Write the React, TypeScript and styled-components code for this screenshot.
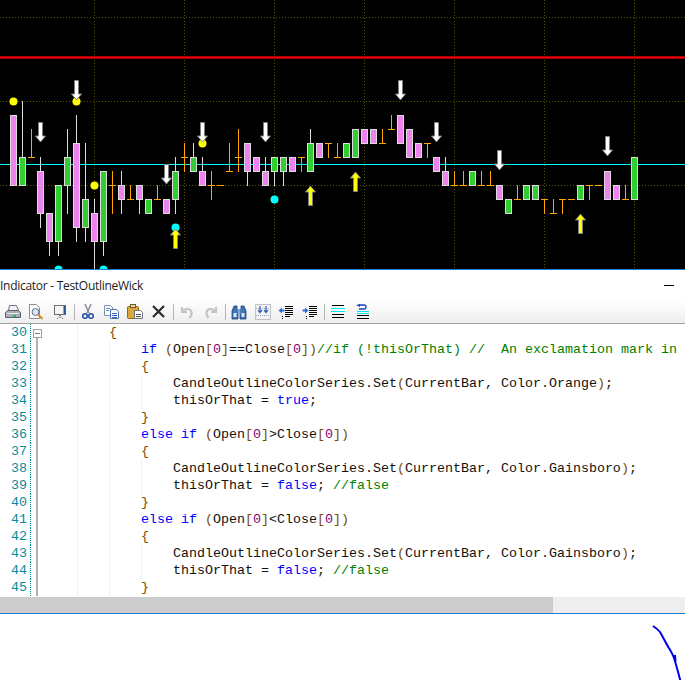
import React from 'react';
import styled, { createGlobalStyle } from 'styled-components';

//
// CHART DATA
//
type Candle =
  | { kind: 'up' | 'down'; top: number; bottom: number; wickTop?: number; wickBottom?: number }
  | { kind: 'doji'; top?: number; bottom?: number; tick: number };

const up = (top: number, bottom: number, wickTop?: number, wickBottom?: number): Candle => ({ kind: 'up', top, bottom, wickTop, wickBottom });
const dn = (top: number, bottom: number, wickTop?: number, wickBottom?: number): Candle => ({ kind: 'down', top, bottom, wickTop, wickBottom });
const dj = (tick: number, top?: number, bottom?: number): Candle => ({ kind: 'doji', tick, top, bottom });

const CANDLES: Candle[] = [
  dn(1, 6), up(4, 6, 0), dj(4, 2, 4), dn(5, 8, 4, 9), dn(8, 10, undefined, 11), up(6, 10, undefined, 11),
  up(4, 6, 2, 8), dn(3, 9, 1, 10), up(7, 9, 3, 10), dn(8, 10, 7, 12), up(5, 10, undefined, 11), dj(6, 5, 8),
  dn(6, 7, 5, 8), dj(7, 6, 7), dn(6, 7, undefined, 8), up(7, 8), dj(7, 6, 7), dn(7, 8),
  up(5, 7, 4, 8), dj(4, 3, 5), up(4, 5, 3), dn(5, 6, 4), dj(6, 5, 7), dj(6),
  dj(5, 3, 5), dj(4, 2, 5), dn(3, 5, undefined, 6), dn(4, 5), dn(5, 6, 4), up(4, 5, undefined, 6),
  up(4, 5, undefined, 6), dn(4, 5), dj(4, 4, 5), up(3, 5, 2), dn(3, 4), dj(3, 3, 4),
  dj(4, 3, 4), up(3, 4), up(2, 4), dn(2, 3), dn(2, 3), dj(3, 2, 3),
  dj(2, 1, 2), dn(1, 3), dn(2, 4), dn(3, 4), dj(3, 3, 4), dn(4, 5),
  dn(5, 6, 4), dj(6, 5, 6), dj(6, 5, 6), up(5, 6), dj(6, 5, 6), dj(6, 5, 6),
  dn(6, 7), up(7, 8), dj(7, 6, 7), up(6, 7), up(6, 7), dj(7, 7, 8),
  dj(8, 7, 8), dj(7, 7, 8), dj(7), up(6, 7), dj(6, 6, 7), dj(6),
  dn(5, 7), dn(6, 7), dj(7, 6, 7), up(4, 7),
];

const GRID_X = [94, 184, 274, 364, 454, 544, 634];
const GRID_Y = [17, 101, 185];
const DOWN_ARROWS = [[76.5, 80], [40.5, 122], [166.5, 164], [202.5, 122], [265.5, 122], [400.5, 80], [436.5, 122], [499.5, 150], [607.5, 136]];
const UP_ARROWS = [[175.5, 228], [310.5, 185], [355.5, 171], [580.5, 213]];
const YELLOW_DOTS = [[13.5, 101.5], [76.5, 101.5], [94.5, 185.5], [202.5, 143.5]];
const CYAN_DOTS = [[175.5, 227.5], [58.5, 269.5], [103.5, 269.5], [274.5, 199.5]];

const level = (n: number) => 101 + 14 * n;

const CandleMark = ({ candle, index }: { candle: Candle; index: number }) => {
  const cx = 13.5 + 9 * index;
  if (candle.kind === 'doji') {
    return (
      <g fill="#ffa500" shapeRendering="crispEdges">
        {candle.top !== undefined && candle.bottom !== undefined && (
          <rect x={cx - 0.5} y={level(candle.top)} width={1} height={level(candle.bottom) - level(candle.top) + 1} />
        )}
        <rect x={cx - 3.5} y={level(candle.tick)} width={7} height={1} />
      </g>
    );
  }
  const { top, bottom, wickTop, wickBottom } = candle;
  return (
    <g shapeRendering="crispEdges">
      {wickTop !== undefined && <rect x={cx - 0.5} y={level(wickTop)} width={1} height={level(top) - level(wickTop)} fill="#dcdcdc" />}
      {wickBottom !== undefined && <rect x={cx - 0.5} y={level(bottom)} width={1} height={level(wickBottom) - level(bottom) + 1} fill="#dcdcdc" />}
      <rect
        x={cx - 3}
        y={level(top) + 0.5}
        width={6}
        height={level(bottom) - level(top)}
        fill={candle.kind === 'up' ? '#32cd32' : '#ee82ee'}
        stroke="#dcdcdc"
      />
    </g>
  );
};

const Arrow = ({ cx, top, dir, fill }: { cx: number; top: number; dir: 'up' | 'down'; fill: string }) => {
  const tip = top + 20;
  const d = dir === 'down'
    ? `M${cx - 2} ${top + 0.5}H${cx + 2}V${tip - 6}H${cx + 5}L${cx} ${tip}L${cx - 5} ${tip - 6}H${cx - 2}Z`
    : `M${cx - 2} ${tip + 0.5}H${cx + 2}V${top + 7}H${cx + 5}L${cx} ${top + 1}L${cx - 5} ${top + 7}H${cx - 2}Z`;
  return <path d={d} fill={fill} stroke="#7f7f7f" strokeWidth={1} />;
};

const PriceChart = () => (
  <ChartSvg width={685} height={269} viewBox="0 0 685 269">
    <rect width={685} height={269} fill="#000" />
    <g stroke="#555500" strokeDasharray="1 2" shapeRendering="crispEdges">
      {GRID_X.map((x) => <line key={x} x1={x + 0.5} y1={0} x2={x + 0.5} y2={269} />)}
      {GRID_Y.map((y) => <line key={y} x1={0} y1={y + 0.5} x2={685} y2={y + 0.5} />)}
    </g>
    <rect y={56} width={685} height={3} fill="#a00000" shapeRendering="crispEdges" />
    <rect y={57} width={685} height={1} fill="#ff0000" shapeRendering="crispEdges" />
    <rect y={164} width={685} height={1} fill="#00ffff" shapeRendering="crispEdges" />
    {CANDLES.map((candle, i) => <CandleMark key={i} candle={candle} index={i} />)}
    {YELLOW_DOTS.map(([x, y]) => <circle key={`${x}y`} cx={x} cy={y} r={4} fill="#ffff00" />)}
    {CYAN_DOTS.map(([x, y]) => <circle key={`${x}c`} cx={x} cy={y} r={4} fill="#00ffff" />)}
    {DOWN_ARROWS.map(([x, y]) => <Arrow key={`${x}d`} cx={x} top={y} dir="down" fill="#fff" />)}
    {UP_ARROWS.map(([x, y]) => <Arrow key={`${x}u`} cx={x} top={y} dir="up" fill="#ffff00" />)}
  </ChartSvg>
);

//
// TOOLBAR ICONS
//
const Lines = ({ rows }: { rows: [number, number, number, string][] }) => (
  <g shapeRendering="crispEdges">
    {rows.map(([x, y, w, c], i) => <rect key={i} x={x} y={y} width={w} height={1} fill={c} />)}
  </g>
);

const ICONS: Record<string, React.ReactNode> = {
  print: (
    <>
      <path d="M4.500 1.500h7l2 5h-10z" fill="#f4f4f4" stroke="#6d7480" />
      <path d="M0.500 8.500l2-2h11l2 2v5h-15z" fill="#a9afb8" stroke="#59606b" />
      <rect x="2" y="9" width="12" height="1" fill="#e6e8ec" />
      <rect x="8" y="11" width="3" height="2" fill="#25c04a" />
    </>
  ),
  preview: (
    <>
      <path d="M1.500 0.500h7l3 3v11h-10z" fill="#fff" stroke="#8c8f99" />
      <circle cx="7.500" cy="8" r="3.500" fill="#d6e6f5" stroke="#66707c" />
      <path d="M10 10.500l4.500 4.500" stroke="#d98a1f" strokeWidth="2" />
    </>
  ),
  board: (
    <>
      <rect x="2.500" y="1.500" width="11" height="9" fill="#f5f5f5" stroke="#6e6e6e" />
      <path d="M12.500 2v8" stroke="#29568f" strokeWidth="2" />
      <path d="M8 11v4M8 11l-3 4M8 11l3 4" stroke="#666" strokeDasharray="1 1" />
    </>
  ),
  cut: (
    <>
      <path d="M5 0l4 9M11 0l-4 9" stroke="#8b8f99" strokeWidth="1.500" />
      <circle cx="5" cy="12" r="2.300" fill="none" stroke="#1f4fa8" strokeWidth="1.500" />
      <circle cx="11" cy="12" r="2.300" fill="none" stroke="#1f4fa8" strokeWidth="1.500" />
    </>
  ),
  copy: (
    <>
      <path d="M0.500 1.500h6l2 2v8h-8z" fill="#fff" stroke="#7f8fb0" />
      <path d="M6.500 5.500h6l2 2v7h-8z" fill="#fff" stroke="#4d6fb5" />
      <Lines rows={[[2, 4, 4, '#6b8cc7'], [2, 6, 3, '#6b8cc7'], [8, 9, 5, '#3a62b5'], [8, 11, 5, '#3a62b5'], [8, 13, 5, '#3a62b5']]} />
    </>
  ),
  paste: (
    <>
      <rect x="0.500" y="2.500" width="11" height="12" rx="1" fill="#d9a93c" stroke="#8a6a20" />
      <rect x="3.500" y="0.500" width="5" height="3" fill="#e9d9a0" stroke="#6b5a2a" />
      <path d="M7.500 6.500h6l2 2v6h-8z" fill="#fff" stroke="#6e7480" />
      <Lines rows={[[9, 10, 5, '#555'], [9, 12, 5, '#555']]} />
    </>
  ),
  del: <path d="M2 2l11 11M13 2l-11 11" stroke="#2a2a2a" strokeWidth="2.200" />,
  undo: <path d="M3 3v5h5M3.500 8c2-4 8-4 9 0 .6 2.500-.5 4-2 6" fill="none" stroke="#c4c4c4" strokeWidth="2.200" />,
  redo: <path d="M13 3v5h-5M12.500 8c-2-4-8-4-9 0-.6 2.500.5 4 2 6" fill="none" stroke="#c4c4c4" strokeWidth="2.200" />,
  find: (
    <>
      <path d="M3 2h3v4h1v9H1V7z" fill="#3f73b8" stroke="#17407f" strokeWidth="0.800" />
      <path d="M10 2h3l2 5v8H9V6h1z" fill="#3f73b8" stroke="#17407f" strokeWidth="0.800" />
      <rect x="6.500" y="5" width="3" height="5" fill="#7fa6d8" />
      <rect x="2.500" y="9" width="3" height="4" fill="#d8e6f6" />
      <rect x="10.500" y="9" width="3" height="4" fill="#d8e6f6" />
    </>
  ),
  replace: (
    <>
      <rect x="0.500" y="0.500" width="15" height="15" fill="#f2f3f8" stroke="#8e8e9a" strokeDasharray="1 1" />
      <path d="M1 4.500h14M1 11.500h14" stroke="#a4a4b0" strokeDasharray="1 1" />
      <path d="M5 2v6M3 6l2 2.500L7 6M11 2v6M9 6l2 2.500L13 6" fill="none" stroke="#1d4fb0" strokeWidth="1.100" />
    </>
  ),
  outdent: (
    <>
      <Lines rows={[[7, 2, 8, '#000'], [7, 4, 8, '#000'], [7, 6, 8, '#000'], [7, 8, 8, '#000'], [7, 10, 8, '#000'], [4, 12, 1, '#000'], [4, 14, 1, '#000'], [7, 12, 5, '#000']]} />
      <path d="M0.500 6.500L4 3.500v2h2.500v2H4v2z" fill="#2b6fd6" />
    </>
  ),
  indent: (
    <>
      <Lines rows={[[7, 2, 8, '#000'], [7, 4, 8, '#000'], [7, 6, 8, '#000'], [7, 8, 8, '#000'], [7, 10, 8, '#000'], [4, 12, 1, '#000'], [4, 14, 1, '#000'], [7, 12, 5, '#000']]} />
      <path d="M6.500 6.500L3 3.500v2H0.500v2H3v2z" fill="#2b6fd6" />
    </>
  ),
  lines: (
    <Lines rows={[[2, 1, 12, '#000'], [1, 4, 14, '#00e5ee'], [1, 7, 14, '#00e5ee'], [2, 10, 12, '#000'], [2, 13, 12, '#000']]} />
  ),
  relines: (
    <>
      <Lines rows={[[3, 7, 12, '#00e5ee'], [3, 9, 12, '#00e5ee'], [3, 11, 12, '#000'], [3, 14, 12, '#000']]} />
      <path d="M5 1h5a2 2 0 0 1 0 4H5" fill="none" stroke="#1a3fc0" strokeWidth="1.300" />
      <path d="M2 1l4-1v3z" fill="#1a3fc0" />
    </>
  ),
};

const TOOLBAR_GROUPS = [
  ['print', 'preview', 'board'],
  ['cut', 'copy', 'paste', 'del'],
  ['undo', 'redo'],
  ['find', 'replace', 'outdent', 'indent'],
  ['lines', 'relines'],
];

//
// CODE
//
const SOURCE: { no: number; depth: number; text: string }[] = [
  { no: 30, depth: 1, text: '        {' },
  { no: 31, depth: 2, text: '            if (Open[0]==Close[0])//if (!thisOrThat) //  An exclamation mark in' },
  { no: 32, depth: 2, text: '            {' },
  { no: 33, depth: 3, text: '                CandleOutlineColorSeries.Set(CurrentBar, Color.Orange);' },
  { no: 34, depth: 3, text: '                thisOrThat = true;' },
  { no: 35, depth: 2, text: '            }' },
  { no: 36, depth: 2, text: '            else if (Open[0]>Close[0])' },
  { no: 37, depth: 2, text: '            {' },
  { no: 38, depth: 3, text: '                CandleOutlineColorSeries.Set(CurrentBar, Color.Gainsboro);' },
  { no: 39, depth: 3, text: '                thisOrThat = false; //false' },
  { no: 40, depth: 2, text: '            }' },
  { no: 41, depth: 2, text: '            else if (Open[0]<Close[0])' },
  { no: 42, depth: 2, text: '            {' },
  { no: 43, depth: 3, text: '                CandleOutlineColorSeries.Set(CurrentBar, Color.Gainsboro);' },
  { no: 44, depth: 3, text: '                thisOrThat = false; //false' },
  { no: 45, depth: 2, text: '            }' },
];

const highlight = (line: string) =>
  line.split(/(\/\/.*$|\b(?:if|else|true|false)\b|\b\d\b|[{}()[\]])/).map((part, i) => {
    if (part.startsWith('//')) return <Comment key={i}>{part}</Comment>;
    if (/^(if|else|true|false)$/.test(part)) return <Keyword key={i}>{part}</Keyword>;
    if (/^\d$/.test(part)) return <Num key={i}>{part}</Num>;
    if (/^[{}()[\]]$/.test(part)) return <Punct key={i}>{part}</Punct>;
    return part;
  });

//
// MAIN COMPONENT
//
const App = () => (
  <Page>
    <GlobalStyle />
    <PriceChart />
    <TitleBar>
      <Title>Indicator - TestOutlineWick</Title>
      <Minimize />
    </TitleBar>
    <Toolbar>
      {TOOLBAR_GROUPS.map((group, i) => (
        <React.Fragment key={i}>
          {i > 0 && <Separator />}
          {group.map((name) => (
            <ToolButton key={name}>
              <svg width={16} height={16} viewBox="0 0 16 16">{ICONS[name]}</svg>
            </ToolButton>
          ))}
        </React.Fragment>
      ))}
    </Toolbar>
    <Editor>
      {SOURCE.map(({ no, depth, text }) => (
        <Row key={no} $depth={depth}>
          <LineNo>{no}</LineNo>
          <Fold>{no === 30 ? <FoldBox /> : <FoldLine />}</Fold>
          <Code>{highlight(text)}</Code>
        </Row>
      ))}
    </Editor>
    <ScrollBar>
      <Thumb />
    </ScrollBar>
    <Footer>
      <svg width={40} height={66} viewBox="0 0 40 66">
        <path
          d="M8 12c3 2 5 3.500 7 6 3 5 5 9.500 8 14.500 2.500 4 4.500 7 6 11.500 2 6 4 14 6.500 23M30 41l.5 7"
          fill="none"
          stroke="#0000f0"
          strokeWidth={2}
        />
      </svg>
    </Footer>
  </Page>
);

export default App;

//
// STYLED COMPONENT
//
const GlobalStyle = createGlobalStyle`
  html, body {
    margin: 0;
    padding: 0;
    background: #fff;
    overflow: hidden;
  }
`;

const Page = styled.div`
  display: flex;
  flex-direction: column;
  width: 685px;
  height: 680px;
  overflow: hidden;
  background: #fff;
`;

const ChartSvg = styled.svg`
  display: block;
  flex: none;
  border-bottom: 1px solid #1c7cd0;
`;

const TitleBar = styled.div`
  display: flex;
  align-items: center;
  justify-content: space-between;
  height: 30px;
  flex: none;
  padding-right: 11px;
  background: #fff;
`;

const Title = styled.span`
  font: 12px "Open Sans", "Liberation Sans", sans-serif;
  letter-spacing: -0.28px;
  color: #1a1a1a;
`;

const Minimize = styled.span`
  width: 10px;
  height: 1px;
  background: #000;
`;

const Toolbar = styled.div`
  display: flex;
  align-items: center;
  height: 23px;
  flex: none;
  padding-left: 1px;
  background: linear-gradient(#ffffff, #eeeeee);
  border-bottom: 1px solid #a0a0a0;
`;

const ToolButton = styled.div`
  display: flex;
  align-items: center;
  justify-content: center;
  width: 23.5px;
  height: 23px;

  svg {
    display: block;
  }
`;

const Separator = styled.div`
  width: 1px;
  height: 16px;
  margin: 0 2px;
  background: #b4b4b4;
`;

const Editor = styled.div`
  flex: none;
  height: 273px;
  overflow: hidden;
  background: #fff;
`;

const guideLayers = (depth: number) =>
  [77, 109, 141]
    .slice(0, depth)
    .map((x) => `linear-gradient(#efefef, #efefef) ${x}px 0 / 1px 100% no-repeat`)
    .join(', ');

const Row = styled.div<{ $depth: number }>`
  display: flex;
  height: 17px;
  background: ${(p) => guideLayers(p.$depth)};
`;

const LineNo = styled.div`
  flex: none;
  box-sizing: border-box;
  width: 31px;
  padding-right: 3px;
  text-align: right;
  border-right: 1px dotted #008c8c;
  font: 13.33px/17px "Liberation Mono", monospace;
  color: #0a8a9c;
`;

const Fold = styled.div`
  position: relative;
  flex: none;
  width: 14px;
`;

const FoldLine = styled.div`
  width: 2px;
  height: 100%;
  margin-left: 5px;
  background: #b0b0b0;
`;

const FoldBox = styled.div`
  position: relative;
  box-sizing: border-box;
  width: 9px;
  height: 9px;
  margin: 5px 0 0 2px;
  border: 1px solid #a0a0a0;
  background: #fff;

  &::before {
    content: "";
    position: absolute;
    left: 1px;
    top: 3px;
    width: 5px;
    height: 1px;
    background: #808080;
  }

  &::after {
    content: "";
    position: absolute;
    left: 2px;
    top: 8px;
    width: 2px;
    height: 3px;
    background: #b0b0b0;
  }
`;

const Code = styled.pre`
  margin: 0;
  font: 13.33px/17px "Liberation Mono", "Courier New", monospace;
  color: #111;
  white-space: pre;
`;

const Keyword = styled.span`
  color: #0000ff;
`;

const Comment = styled.span`
  color: #008000;
`;

const Num = styled.span`
  color: #800080;
`;

const Punct = styled.span`
  color: #7a4a00;
`;

const ScrollBar = styled.div`
  flex: none;
  height: 16px;
  background: #eeeeee;
`;

const Thumb = styled.div`
  width: 553px;
  height: 100%;
  background: #cccccc;
`;

const Footer = styled.div`
  display: flex;
  justify-content: flex-end;
  flex: 1;
  border-top: 1px solid #1c7cd0;
  background: #fff;
`;
